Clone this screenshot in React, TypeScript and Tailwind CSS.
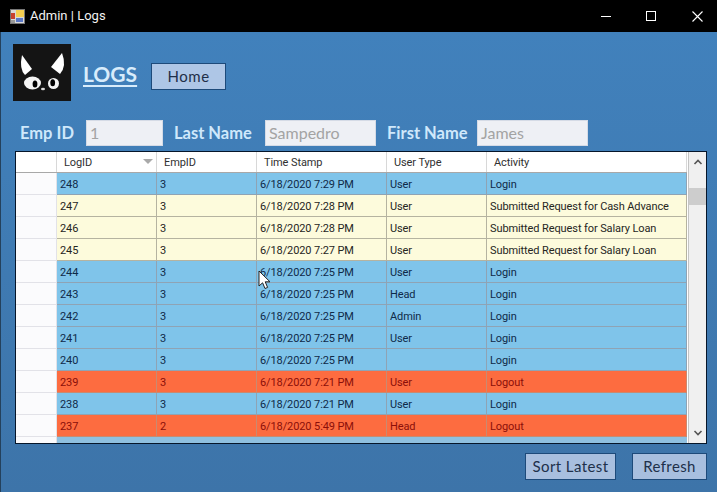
import React from "react";

const logs = [
  { id: "248", emp: "3", time: "6/18/2020 7:29 PM", type: "User", activity: "Login", kind: "login" },
  { id: "247", emp: "3", time: "6/18/2020 7:28 PM", type: "User", activity: "Submitted Request for Cash Advance", kind: "request" },
  { id: "246", emp: "3", time: "6/18/2020 7:28 PM", type: "User", activity: "Submitted Request for Salary Loan", kind: "request" },
  { id: "245", emp: "3", time: "6/18/2020 7:27 PM", type: "User", activity: "Submitted Request for Salary Loan", kind: "request" },
  { id: "244", emp: "3", time: "6/18/2020 7:25 PM", type: "User", activity: "Login", kind: "login" },
  { id: "243", emp: "3", time: "6/18/2020 7:25 PM", type: "Head", activity: "Login", kind: "login" },
  { id: "242", emp: "3", time: "6/18/2020 7:25 PM", type: "Admin", activity: "Login", kind: "login" },
  { id: "241", emp: "3", time: "6/18/2020 7:25 PM", type: "User", activity: "Login", kind: "login" },
  { id: "240", emp: "3", time: "6/18/2020 7:25 PM", type: "", activity: "Login", kind: "login" },
  { id: "239", emp: "3", time: "6/18/2020 7:21 PM", type: "User", activity: "Logout", kind: "logout" },
  { id: "238", emp: "3", time: "6/18/2020 7:21 PM", type: "User", activity: "Login", kind: "login" },
  { id: "237", emp: "2", time: "6/18/2020 5:49 PM", type: "Head", activity: "Logout", kind: "logout" },
];

const rowColors: Record<string, string> = {
  login: "bg-[#7fc4ea] text-[#0f2a48] border-[#8fa3b4]",
  request: "bg-[#fdfbdc] text-[#26261e] border-[#b5b3a0]",
  logout: "bg-[#fd6c40] text-[#8b0f0a] border-[#c98a70]",
};

const Field = ({ label, value, labelClass, inputClass }: { label: string; value: string; labelClass: string; inputClass: string }) => (
  <>
    <span className={`text-[16.5px] font-bold text-[#cfe8fb] ${labelClass}`}>{label}</span>
    <div className={`h-[26px] bg-[#eef0f5] border border-[#d5dbe6] pl-[3px] flex items-center text-[16px] text-[#a3a3a3] ${inputClass}`}>
      {value}
    </div>
  </>
);

const Header = ({ w, children }: { w: string; children?: React.ReactNode }) => (
  <div className={`${w} h-full flex items-center pl-[7px] pt-[2px] border-r border-[#d8d8d8] relative`}>{children}</div>
);

const Cell = ({ w, children }: { w: string; children?: React.ReactNode }) => (
  <div className={`${w} h-full flex items-center pl-[3px] pt-[4px] border-r border-inherit whitespace-nowrap`}>{children}</div>
);

export default function App() {
  return (
    <div className="w-[717px] h-[492px] overflow-hidden flex flex-col bg-black font-['Roboto',sans-serif]">
      {/* title bar */}
      <div className="h-[32px] shrink-0 bg-black flex items-center text-white">
        <svg width="15" height="15" viewBox="0 0 15 15" className="ml-[10px]">
          <rect x="0.5" y="0.5" width="14" height="14" fill="#d8d8d8" stroke="#777" />
          <rect x="6" y="1" width="8" height="7" fill="#f4cf52" />
          <rect x="1" y="4" width="4" height="6" fill="#c8402e" />
          <rect x="6" y="9" width="7" height="4" fill="#5a77c4" />
          <rect x="1" y="11" width="4" height="3" fill="#999" />
        </svg>
        <span className="ml-[5px] text-[13px] text-[#f2f2f2]">Admin | Logs</span>
        <div className="ml-auto flex items-center">
          <div className="w-[10px] h-[1px] bg-white mr-[35px]" />
          <div className="w-[10px] h-[10px] border border-white mr-[36px]" />
          <svg width="11" height="11" viewBox="0 0 11 11" className="mr-[14px]">
            <path d="M0.5 0.5L10.5 10.5M10.5 0.5L0.5 10.5" stroke="#fff" strokeWidth="1.1" />
          </svg>
        </div>
      </div>

      {/* form body */}
      <div className="flex-1 bg-gradient-to-b from-[#4181bc] to-[#3d74a9] border-l border-[#24415c] pl-[12px] pr-[10px] pt-[12px] font-['Lato',sans-serif]">
        <div className="flex items-center h-[57px]">
          <div className="w-[58px] h-[57px] bg-[#141414] shrink-0">
            <svg width="58" height="57" viewBox="0 0 58 57">
              <path d="M9 11 L19 25 L12 31 Q6 25 9 11Z" fill="#fff" />
              <path d="M49 9 L38 23 L47 30 Q54 22 49 9Z" fill="#fff" />
              <ellipse cx="19.5" cy="39" rx="8.5" ry="6.5" fill="#f4f4f4" />
              <ellipse cx="40.5" cy="39.5" rx="5.5" ry="5.5" fill="#f4f4f4" />
              <ellipse cx="22" cy="40" rx="2.4" ry="3.5" fill="#000" />
              <ellipse cx="39.7" cy="38.7" rx="2.4" ry="3.5" fill="#000" />
              <ellipse cx="30" cy="45" rx="2" ry="1.2" fill="#ddd" />
            </svg>
          </div>
          <span className="ml-[12px] mt-[1px] text-[21px] leading-none font-bold text-[#d8ecfb] underline underline-offset-[3px] decoration-2">LOGS</span>
          <div className="ml-[14px] mt-[8px] w-[75px] h-[27px] bg-[#aec6e6] border border-[#1d4a7a] flex items-center justify-center text-[15px] text-[#1f2f48] tracking-[0.5px]">
            Home
          </div>
        </div>

        <div className="flex items-center mt-[19px] pl-[7px] h-[26px]">
          <Field label="Emp ID" value="1" labelClass="w-[66px]" inputClass="w-[77px]" />
          <Field label="Last Name" value="Sampedro" labelClass="ml-[11px] w-[91px]" inputClass="w-[111px]" />
          <Field label="First Name" value="James" labelClass="ml-[11px] w-[90px]" inputClass="w-[111px]" />
        </div>

        {/* grid */}
        <div className="mt-[5px] ml-[2px] w-[692px] h-[293px] bg-white border border-[#06162a] flex overflow-hidden text-[11px] tracking-[-0.1px] font-['Roboto',sans-serif]">
          <div className="w-[671px] flex flex-col shrink-0">
            <div className="h-[21px] shrink-0 flex items-center bg-white text-[#303030] border-b border-[#a8a8a8]">
              <Header w="w-[41px]" />
              <Header w="w-[100px]">
                LogID
                <svg width="10" height="6" viewBox="0 0 10 6" className="absolute right-[3px] top-[7px]">
                  <path d="M0 0H10L5 5Z" fill="#a9a9a9" />
                </svg>
              </Header>
              <Header w="w-[100px]">EmpID</Header>
              <Header w="w-[130px]">Time Stamp</Header>
              <Header w="w-[100px]">User Type</Header>
              <Header w="w-[200px]">Activity</Header>
            </div>
            {logs.map((r) => (
              <div key={r.id} className="h-[22px] shrink-0 flex">
                <div className="w-[41px] shrink-0 bg-[#fbfbfd] border-b border-r border-[#e2e2e8]" />
                <div className={`flex flex-1 border-b ${rowColors[r.kind]}`}>
                  <Cell w="w-[100px]">{r.id}</Cell>
                  <Cell w="w-[100px]">{r.emp}</Cell>
                  <Cell w="w-[130px]">{r.time}</Cell>
                  <Cell w="w-[100px]">{r.type}</Cell>
                  <Cell w="w-[200px]">{r.activity}</Cell>
                </div>
              </div>
            ))}
            <div className="flex flex-1">
              <div className="w-[41px] bg-[#fbfbfd] border-r border-[#e2e2e8]" />
              <div className="flex-1 bg-[#8fc0e0]" />
            </div>
          </div>
          <div className="flex-1 ml-[1px] bg-[#f0f0f0] border-l border-[#c4c4c4] flex flex-col items-center">
            <svg width="10" height="6" viewBox="0 0 10 6" className="mt-[7px]">
              <path d="M1.5 5L5 1.5L8.5 5" fill="none" stroke="#555" strokeWidth="1.6" />
            </svg>
            <div className="w-full h-[17px] bg-[#cdcdcd] mt-[23px]" />
            <svg width="10" height="6" viewBox="0 0 10 6" className="mt-auto mb-[7px]">
              <path d="M1.5 1L5 4.5L8.5 1" fill="none" stroke="#555" strokeWidth="1.6" />
            </svg>
          </div>
        </div>

        <div className="flex justify-end mt-[9px] gap-[16px] text-[15px] text-[#20304a] tracking-[0.4px]">
          <div className="w-[91px] h-[27px] bg-[#a8bfdf] border border-[#1d4a7a] flex items-center justify-center">Sort Latest</div>
          <div className="w-[75px] h-[27px] bg-[#a8bfdf] border border-[#1d4a7a] flex items-center justify-center">Refresh</div>
        </div>
      </div>

      {/* mouse pointer from the capture */}
      <svg width="15" height="21" viewBox="0 0 15 21" className="absolute left-[258px] top-[270px]">
        <path d="M1 1V16L4.6 12.8L7 18.5L9.6 17.4L7.2 11.8H12Z" fill="#fff" stroke="#222" strokeWidth="1" />
      </svg>
    </div>
  );
}
